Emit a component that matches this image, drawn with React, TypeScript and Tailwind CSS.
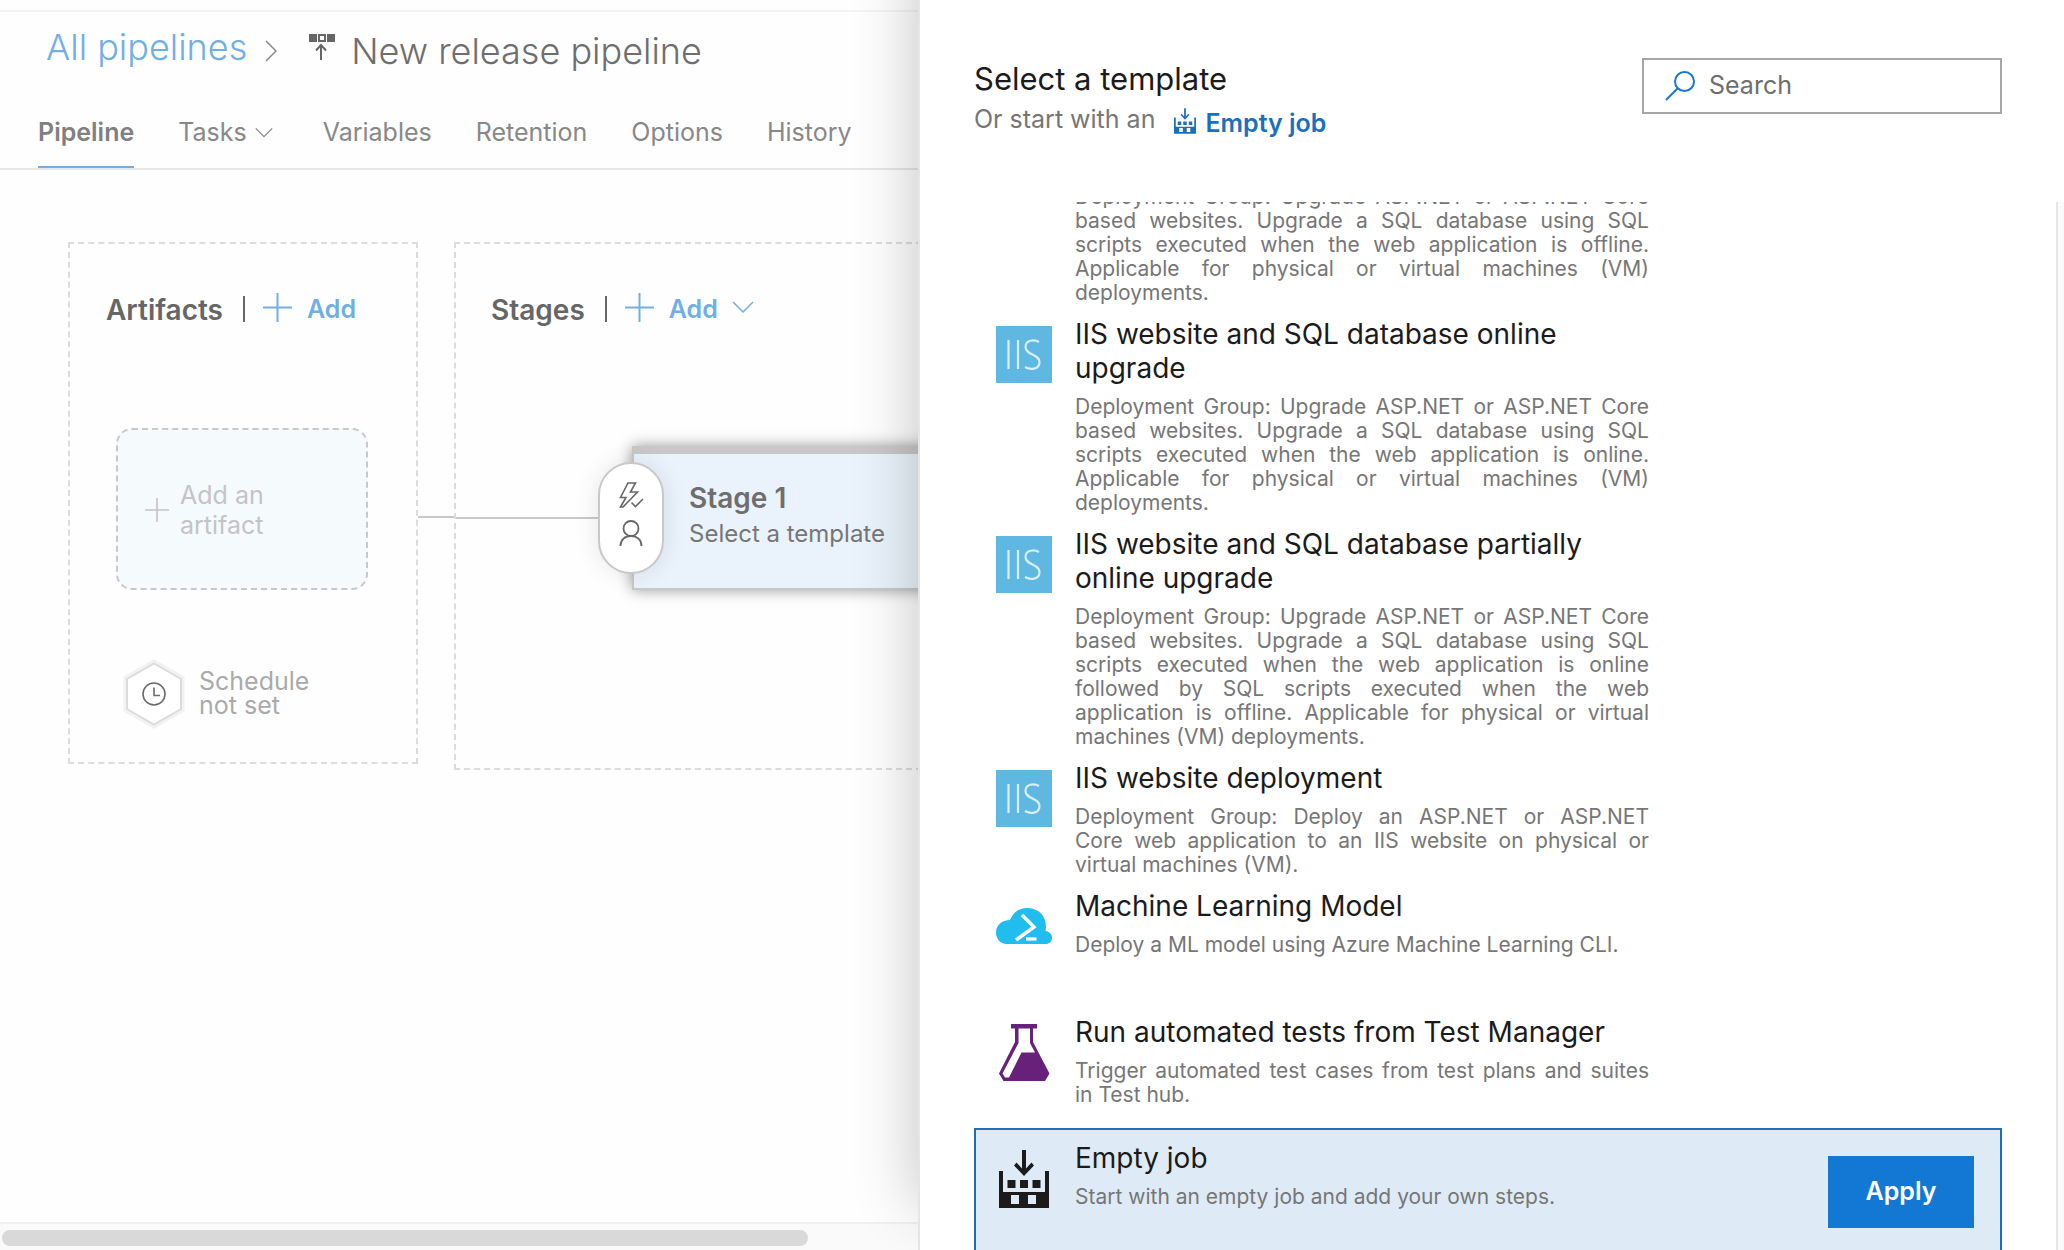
import { useLayoutEffect, useRef } from "react";
import type { ReactNode } from "react";

function Plus({ className }: { className: string }) {
  return (
    <svg viewBox="0 0 29 29" className={className} fill="none" stroke="currentColor" strokeWidth="2" aria-hidden="true">
      <path d="M14.5 0V29M0 14.5H29" />
    </svg>
  );
}

function Chevron({ className }: { className: string }) {
  return (
    <svg viewBox="0 0 22 12" className={className} fill="none" stroke="currentColor" strokeWidth="1.5" aria-hidden="true">
      <path d="M1 1L11 11L21 1" />
    </svg>
  );
}

function ReleaseIcon() {
  return (
    <svg viewBox="0 0 26 26" className="h-[26px] w-[26px] text-[#666666]" fill="currentColor" aria-hidden="true">
      <path d="M0 0H8V8H0ZM18 0H26V8H18Z" />
      <path d="M10 1H16V7H10Z" fill="none" stroke="currentColor" strokeWidth="2" />
      <path d="M12 26V11M7 16.5L12 11L17 16.5" fill="none" stroke="currentColor" strokeWidth="2" />
    </svg>
  );
}

function JobIcon({ className }: { className: string }) {
  return (
    <svg viewBox="0 0 50 58" className={className} fill="currentColor" aria-hidden="true">
      <path
        fillRule="evenodd"
        d="M0 21H4V42H46V21H50V58H0ZM12 45V54H20V45ZM29 45V54H37V45Z"
      />
      <path d="M8.500 30H16.500V38H8.500ZM21 30H29V38H21ZM33.500 30H41.500V38H33.500Z" />
      <path d="M23 0H27V18.500L32.500 12.500L35 15.500L25 26L15 15.500L17.500 12.500L23 18.500Z" />
    </svg>
  );
}

function IisIcon() {
  return (
    <svg viewBox="0 0 56 57" className="h-[57px] w-14" aria-hidden="true">
      <rect width="56" height="57" fill="#5eb8e1" />
      <path
        d="M12.500 14V43M22 14V43M43 16C38 13 29.500 14 29.500 21C29.500 29 43.500 28 43.500 36C43.500 44 34 44 29 41"
        fill="none"
        stroke="#d9effa"
        strokeWidth="2.200"
      />
    </svg>
  );
}

function CloudIcon() {
  return (
    <svg viewBox="0 0 56 57" className="h-[57px] w-14" aria-hidden="true">
      <path
        d="M11 46C4 46 0 40.500 0 34.500C0 27 6 22 14 22C17 14 24 9.500 32 10C43 10.500 50 18 50 29C50 31 49.500 32 49.500 33C53 33.500 56 36 56 39.500C56 43.500 53.500 46 49.500 46Z"
        fill="#22bdef"
      />
      <path d="M26 17L38 29L20 42" fill="none" stroke="#fff" strokeWidth="3.500" />
      <path d="M30 41H40.500" stroke="#fff" strokeWidth="3.200" />
    </svg>
  );
}

function FlaskIcon() {
  return (
    <svg viewBox="0 0 56 57" className="h-[57px] w-14" aria-hidden="true">
      <path
        fillRule="evenodd"
        fill="#68217a"
        d="M15 0H41V4.500H37V18L53.500 49.500L49 57H7.500L3 49.500L19 18V4.500H15ZM22.500 4.500V19L6.500 49.500L9 53.500H13L25.500 28.500H39L34 19V4.500Z"
      />
    </svg>
  );
}

function ScheduleIcon() {
  return (
    <svg viewBox="0 0 66 72" className="h-[72px] w-[66px]" fill="none" aria-hidden="true">
      <path d="M33 4L61 20V52L33 68L5 52V20Z" stroke="#f2f2f2" strokeWidth="5" />
      <path d="M33 5.500L60 21V51L33 66.500L6 51V21Z" fill="#fff" stroke="#dcdcdc" strokeWidth="2" />
      <circle cx="33" cy="36" r="11" stroke="#6b6b6b" strokeWidth="1.600" />
      <path d="M33 29.500V37.500H39" stroke="#6b6b6b" strokeWidth="1.600" />
    </svg>
  );
}

const tabs = ["Variables", "Retention", "Options", "History"];

type Template = { title: string; text: string; icon: ReactNode };

const templates: Template[] = [
  {
    title: "IIS website and SQL database offline upgrade",
    text: "Deployment Group: Upgrade ASP.NET or ASP.NET Core based websites. Upgrade a SQL database using SQL scripts executed when the web application is offline. Applicable for physical or virtual machines (VM) deployments.",
    icon: <IisIcon />,
  },
  {
    title: "IIS website and SQL database online upgrade",
    text: "Deployment Group: Upgrade ASP.NET or ASP.NET Core based websites. Upgrade a SQL database using SQL scripts executed when the web application is online. Applicable for physical or virtual machines (VM) deployments.",
    icon: <IisIcon />,
  },
  {
    title: "IIS website and SQL database partially online upgrade",
    text: "Deployment Group: Upgrade ASP.NET or ASP.NET Core based websites. Upgrade a SQL database using SQL scripts executed when the web application is online followed by SQL scripts executed when the web application is offline. Applicable for physical or virtual machines (VM) deployments.",
    icon: <IisIcon />,
  },
  {
    title: "IIS website deployment",
    text: "Deployment Group: Deploy an ASP.NET or ASP.NET Core\u00a0web application to an IIS website on physical or virtual machines (VM).",
    icon: <IisIcon />,
  },
  {
    title: "Machine Learning Model",
    text: "Deploy a ML model using Azure Machine Learning CLI.",
    icon: <CloudIcon />,
  },
  {
    title: "Run automated tests from Test Manager",
    text: "Trigger automated test cases from test plans and suites in Test hub.",
    icon: <FlaskIcon />,
  },
];

function TemplateBody({ title, text, icon }: Template) {
  return (
    <>
      <div className="shrink-0 pt-[9px]">{icon}</div>
      <div className="w-[574px]">
        <h3 className="text-[28px] leading-[34px] text-[#1b1b1b]">{title}</h3>
        <p className="mt-[10px] text-justify text-[21px] leading-6 text-[#767676]">{text}</p>
      </div>
    </>
  );
}

function PipelineHeader() {
  return (
    <header className="mt-[10px] border-t-2 border-[#f3f3f3]">
      <div className="flex h-[70px] items-center pl-[46px]">
        <a href="#pipelines" className="text-[36px] leading-[44px] font-light text-[#70afe5]">All pipelines</a>
        <svg viewBox="0 0 12 22" className="mt-2 ml-[18px] h-[22px] w-3" fill="none" stroke="#888" strokeWidth="1.500" aria-hidden="true">
          <path d="M1 1L11 11L1 21" />
        </svg>
        <div className="ml-8"><ReleaseIcon /></div>
        <h1 className="mt-2 ml-4 text-[36px] leading-[44px] font-light whitespace-nowrap text-[#6e6e6e]">New release pipeline</h1>
      </div>
      <nav className="flex h-[88px] items-stretch gap-11 border-b-2 border-[#e6e6e6] pt-5 pl-[38px] text-[25px] leading-[60px] text-[#888888]">
        <a href="#pipeline" className="border-b-2 border-[#70afe5] font-semibold text-[#808080]">Pipeline</a>
        <button className="mr-[6px] flex items-center gap-2 self-start">
          Tasks
          <Chevron className="h-[11px] w-[18px]" />
        </button>
        {tabs.map((tab) => (
          <a key={tab} href={"#" + tab.toLowerCase()}>{tab}</a>
        ))}
      </nav>
    </header>
  );
}

function SectionTitle({ title, menu }: { title: string; menu?: boolean }) {
  return (
    <div className="flex h-[30px] items-center">
      <h2 className="mb-[2px] text-[28px] leading-[30px] font-semibold text-[#666666]">{title}</h2>
      <span className="mb-1 ml-5 h-[26px] w-[2px] bg-[#666666]" />
      <button className="mb-1 ml-[18px] flex items-center text-[25px] leading-[30px] font-semibold text-[#70afe5]">
        <Plus className="mb-1 h-[29px] w-[29px]" />
        <span className="ml-[15px]">Add</span>
        {menu && <Chevron className="mb-1 ml-[14px] h-3 w-[22px]" />}
      </button>
    </div>
  );
}

function Artifacts() {
  return (
    <section className="h-[522px] w-[350px] shrink-0 border-2 border-dashed border-[#dcdcdc] px-9 pt-[52px]">
      <SectionTitle title="Artifacts" />
      <button className="mx-[10px] mt-[102px] flex h-[162px] w-[252px] items-center gap-[11px] rounded-2xl border-2 border-dashed border-[#c8c8c8] bg-[#f5fafd] pt-[2px] pl-[27px] text-left text-[25px] leading-[30px] text-[#c4c4c4]">
        <Plus className="h-6 w-6" />
        <span className="w-28">Add an artifact</span>
      </button>
      <div className="mt-[68px] ml-[15px] flex items-center gap-3 text-[25px] leading-6 text-[#aaaaaa]">
        <ScheduleIcon />
        <p className="mb-[2px] w-28">Schedule not set</p>
      </div>
    </section>
  );
}

function Stages() {
  return (
    <section className="h-[528px] w-[900px] shrink-0 border-2 border-dashed border-[#dcdcdc] pt-[52px]">
      <div className="pl-[35px]"><SectionTitle title="Stages" menu /></div>
      <div className="mt-[120px] flex">
        <div className="mt-[71px] h-[2px] w-[142px] bg-[#c8c8c8]" />
        <div className="z-10 mt-4 -mr-8 flex h-28 w-[66px] flex-col items-center gap-3 rounded-full border-2 border-[#c8c8c8] bg-white pt-[18px] shadow-[0_0_24px_rgba(0,0,0,0.1)]">
          <svg viewBox="0 0 25 26" className="h-[26px] w-[25px]" fill="none" stroke="#666" strokeWidth="1.600" aria-label="Pre-deployment triggers">
            <path d="M9 1H16.500L11.500 10H18.500L4 25H1.500L7 15.500H1.500Z" />
            <path d="M12.500 20.500L16.500 24.500L24 17" />
          </svg>
          <svg viewBox="0 0 24 26" className="h-[26px] w-6" fill="none" stroke="#666" strokeWidth="1.800" aria-label="Pre-deployment approvers">
            <circle cx="12" cy="8.500" r="7.500" />
            <path d="M1.500 26C1.500 19.500 6 16 12 16C18 16 22.500 19.500 22.500 26" />
          </svg>
        </div>
        <article className="h-36 w-[320px] border-t-8 border-b-2 border-l-2 border-[#c8c8c8] bg-[#eaf3fb] pt-[27px] pl-[55px] shadow-[0_0_14px_rgba(0,0,0,0.4)]">
          <h3 className="text-[28px] leading-[34px] font-semibold text-[#6e6e6e]">Stage 1</h3>
          <p className="text-[24px] leading-[38px] text-[#767676]">Select a template</p>
        </article>
      </div>
    </section>
  );
}

function TemplatePanel() {
  const list = useRef<HTMLDivElement>(null);
  useLayoutEffect(() => {
    if (list.current) list.current.scrollTop = 107;
  }, []);
  return (
    <aside className="z-20 flex min-h-0 min-w-0 flex-col border-l-2 border-[#e5e5e5] bg-white shadow-[0_-44px_60px_rgba(0,0,0,0.24)]">
      <header className="flex h-[202px] shrink-0 items-start justify-between pt-[58px] pr-[62px] pl-[54px]">
        <div>
          <h2 className="text-[31px] leading-[42px] text-[#1b1b1b]">Select a template</h2>
          <div className="flex items-start gap-[19px] text-[25px] leading-[38px] text-[#767676]">
            <span>Or start with an</span>
            <button className="mt-1 flex items-center gap-[9px] font-semibold text-[#1a6fbf]">
              <JobIcon className="mb-1 h-[26px] w-[22px]" />
              Empty job
            </button>
          </div>
        </div>
        <label className="flex h-14 w-[360px] items-center gap-[14px] border-2 border-[#a6a6a6] pl-[21px]">
          <svg viewBox="0 0 30 30" className="h-[30px] w-[30px] shrink-0" fill="none" stroke="#1378d3" strokeWidth="2" aria-hidden="true">
            <circle cx="19.500" cy="10.500" r="9.500" />
            <path d="M12.500 17.500L1 29" />
          </svg>
          <input
            type="text"
            aria-label="Search"
            placeholder="Search"
            className="mb-[2px] min-w-0 flex-1 text-[25px] leading-[30px] outline-none placeholder:text-[#6e6e6e]"
          />
        </label>
      </header>
      <div className="flex min-h-0 flex-1">
        <div ref={list} className="min-w-0 flex-1 overflow-y-auto pr-[54px] pl-[54px] [scrollbar-width:none]">
          {templates.map((t) => (
            <div key={t.title} className="flex min-h-[126px] gap-[23px] pt-3 pl-[22px]">
              <TemplateBody {...t} />
            </div>
          ))}
          <div className="-mt-px flex min-h-[126px] items-start gap-[23px] border-2 border-[#1a6fbf] bg-[#deebf6] pt-[11px] pr-[26px] pl-5">
            <TemplateBody
              title="Empty job"
              text="Start with an empty job and add your own steps."
              icon={<div className="flex w-14 justify-center"><JobIcon className="h-[58px] w-[50px] text-[#1b1b1b]" /></div>}
            />
            <button className="mt-[15px] ml-auto h-[72px] w-[146px] bg-[#1378d3] text-[25px] font-semibold text-white">Apply</button>
          </div>
        </div>
        <div className="w-2 shrink-0 border-l-2 border-[#e5e5e5] bg-[#fafafa]" />
      </div>
    </aside>
  );
}

export default function App() {
  return (
    <div className="grid h-screen grid-cols-[459fr_573fr] grid-rows-[minmax(0,1fr)] overflow-hidden bg-[#fefefe] font-['Inter','Liberation_Sans',sans-serif]">
      <main className="flex min-w-0 flex-col overflow-hidden">
        <PipelineHeader />
        <div className="flex min-h-0 flex-1 overflow-hidden pt-[72px] pl-[68px]">
          <Artifacts />
          <div className="mt-[274px] h-[2px] w-9 shrink-0 bg-[#c8c8c8]" />
          <Stages />
        </div>
        <div className="h-7 border-t-2 border-[#f0f0f0] bg-[#fafafa] pt-[6px] pl-[2px]">
          <div className="h-4 w-[88%] rounded-full bg-[#d9d9d9]" />
        </div>
      </main>
      <TemplatePanel />
    </div>
  );
}
